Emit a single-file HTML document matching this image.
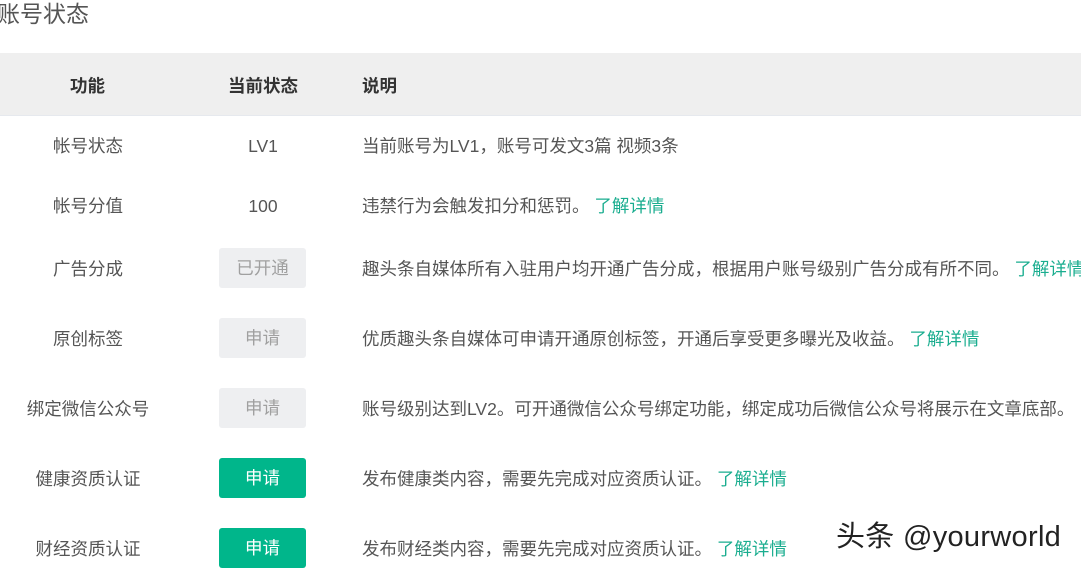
<!DOCTYPE html>
<html><head><meta charset="utf-8"><style>
body{margin:0;width:1081px;height:570px;overflow:hidden;background:#fff;font-family:"Liberation Sans","Noto Sans CJK SC",sans-serif;color:#555;position:relative}
.t{position:absolute;white-space:nowrap}
.title{left:-3px;top:-1px;font-size:23px;color:#555;line-height:30px}
.hd{position:absolute;left:0;top:53px;width:1081px;height:62px;background:#efefef;border-bottom:1px solid #e6e9ee}
.h{font-weight:bold;color:#333;font-size:17.5px;top:75px;line-height:22px}
.c1,.c2{font-size:17.5px;line-height:22px;transform:translateX(-50%)}
.c1{left:88px}.c2{left:263px}
.c3{left:362px;font-size:17.5px;line-height:22px}
a{color:#1aad8f;text-decoration:none}
.b{position:absolute;left:219px;width:87px;height:40px;border-radius:3px;background:#eeeff1;color:#a0a0a0;font-size:17.5px;line-height:40px;text-align:center}
.g{background:#00b68b;color:#fff}
.wm{left:836px;top:520px;font-size:29px;color:#222;line-height:34px;font-weight:normal;letter-spacing:0.3px}
</style></head><body>
<div class="t title">账号状态</div>
<div class="hd"></div>
<div class="t h" style="left:70px">功能</div>
<div class="t h" style="left:228px">当前状态</div>
<div class="t h" style="left:362px">说明</div>

<div class="t c1" style="top:135px">帐号状态</div>
<div class="t c2" style="top:135px">LV1</div>
<div class="t c3" style="top:135px">当前账号为LV1，账号可发文3篇 视频3条</div>

<div class="t c1" style="top:195px">帐号分值</div>
<div class="t c2" style="top:195px">100</div>
<div class="t c3" style="top:195px">违禁行为会触发扣分和惩罚。 <a>了解详情</a></div>

<div class="t c1" style="top:258px">广告分成</div>
<div class="b" style="top:248px">已开通</div>
<div class="t c3" style="top:258px">趣头条自媒体所有入驻用户均开通广告分成，根据用户账号级别广告分成有所不同。 <a>了解详情</a></div>

<div class="t c1" style="top:328px">原创标签</div>
<div class="b" style="top:318px">申请</div>
<div class="t c3" style="top:328px">优质趣头条自媒体可申请开通原创标签，开通后享受更多曝光及收益。 <a>了解详情</a></div>

<div class="t c1" style="top:398px">绑定微信公众号</div>
<div class="b" style="top:388px">申请</div>
<div class="t c3" style="top:398px">账号级别达到LV2。可开通微信公众号绑定功能，绑定成功后微信公众号将展示在文章底部。</div>

<div class="t c1" style="top:468px">健康资质认证</div>
<div class="b g" style="top:458px">申请</div>
<div class="t c3" style="top:468px">发布健康类内容，需要先完成对应资质认证。 <a>了解详情</a></div>

<div class="t c1" style="top:538px">财经资质认证</div>
<div class="b g" style="top:528px">申请</div>
<div class="t c3" style="top:538px">发布财经类内容，需要先完成对应资质认证。 <a>了解详情</a></div>

<div class="t wm">头条 @yourworld</div>
</body></html>
